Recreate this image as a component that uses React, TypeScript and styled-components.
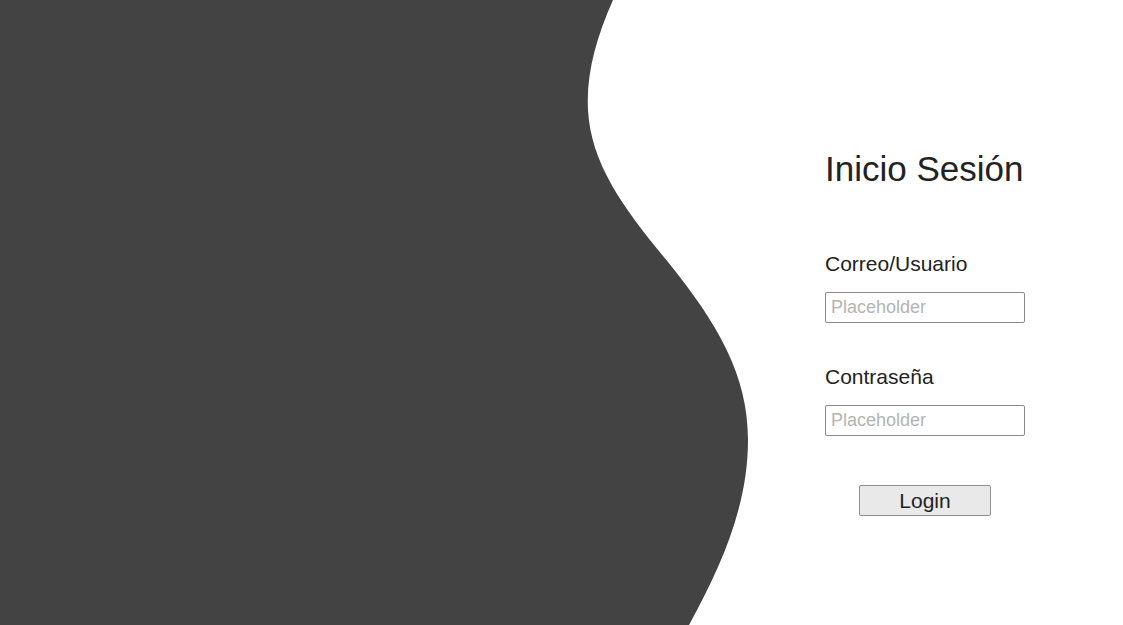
import styled, { createGlobalStyle } from 'styled-components';

const GlobalStyle = createGlobalStyle`
  html, body {
    margin: 0;
    padding: 0;
    background: #ffffff;
    font-family: 'Liberation Sans', Arial, sans-serif;
  }
`;

const Page = styled.div`
  display: grid;
  grid-template-columns: 760px 1fr;
  width: 1123px;
  height: 625px;
  overflow: hidden;
  background: #ffffff;
`;

const WaveArea = styled.div`
  height: 625px;

  svg {
    display: block;
  }
`;

const FormColumn = styled.div`
  display: flex;
  flex-direction: column;
  padding: 149px 0 0 65px;
  width: 200px;
`;

const Title = styled.h1`
  margin: 0 0 63px;
  font-size: 35px;
  font-weight: 400;
  line-height: 40px;
  color: #222222;
  white-space: nowrap;
`;

const Label = styled.label`
  display: block;
  margin: 0 0 16px;
  font-size: 21px;
  line-height: 24px;
  color: #222222;
`;

const TextInput = styled.input`
  box-sizing: border-box;
  width: 200px;
  height: 31px;
  margin: 0 0 ${(p: { $gap: number }) => p.$gap}px;
  padding: 0 5px;
  border: 1px solid #8a8a8a;
  border-radius: 2px;
  font-family: 'Liberation Sans', Arial, sans-serif;
  font-size: 18px;
  color: #222222;
  outline: none;

  &::placeholder {
    color: #b4b4b4;
  }
`;

const LoginButton = styled.button`
  box-sizing: border-box;
  align-self: center;
  width: 132px;
  height: 31px;
  padding: 0;
  border: 1px solid #8f8f8f;
  border-radius: 2px;
  background: #e9e9e9;
  font-family: 'Liberation Sans', Arial, sans-serif;
  font-size: 21px;
  color: #222222;
  cursor: pointer;
`;

const Wave = () => (
  <svg width="760" height="625" viewBox="0 0 760 625">
    <path
      fill="#434343"
      d="M0,0 L613,0 C596,38 586,75 588,110 C591,165 625,210 668,262 C718,324 748,375 748,440 C748,505 722,565 689,625 L0,625 Z"
    />
  </svg>
);

export default function App() {
  return (
    <>
      <GlobalStyle />
      <Page>
        <WaveArea>
          <Wave />
        </WaveArea>
        <FormColumn>
          <Title>Inicio Sesión</Title>
          <Label htmlFor="user">Correo/Usuario</Label>
          <TextInput id="user" placeholder="Placeholder" $gap={42} />
          <Label htmlFor="pass">Contraseña</Label>
          <TextInput id="pass" type="password" placeholder="Placeholder" $gap={49} />
          <LoginButton type="button">Login</LoginButton>
        </FormColumn>
      </Page>
    </>
  );
}
